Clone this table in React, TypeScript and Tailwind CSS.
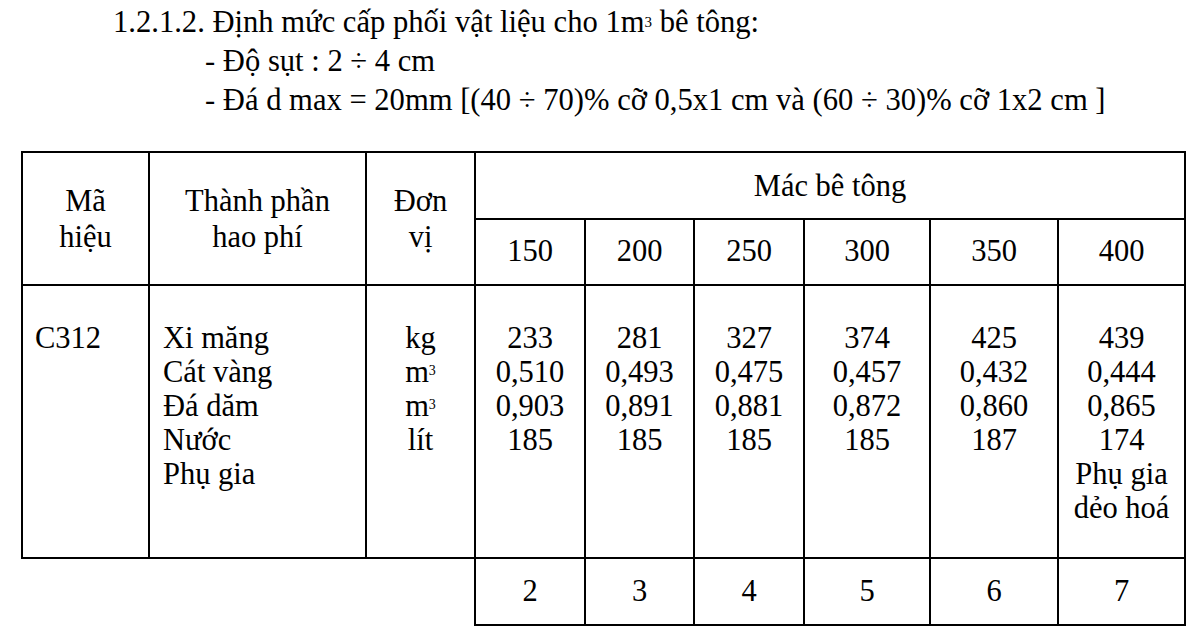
import React from "react";

const cell = "border-2 border-black";

const values: { top: string[]; extra?: string[] }[] = [
  { top: ["233", "0,510", "0,903", "185"] },
  { top: ["281", "0,493", "0,891", "185"] },
  { top: ["327", "0,475", "0,881", "185"] },
  { top: ["374", "0,457", "0,872", "185"] },
  { top: ["425", "0,432", "0,860", "187"] },
  { top: ["439", "0,444", "0,865", "174"], extra: ["Phụ gia", "dẻo hoá"] },
];

export default function App() {
  return (
    <div className="w-[1191px] h-[638px] bg-white text-black overflow-hidden font-['Liberation_Serif','Times_New_Roman',serif]">
      <div className="pt-[3px] text-[30.6px] leading-[39px]">
        <div className="pl-[113px]">
          1.2.1.2. Định mức cấp phối vật liệu cho 1m
          <sup className="text-[15px] relative top-[-5px]">3</sup> bê tông:
        </div>
        <div className="pl-[205px]">- Độ sụt : 2 ÷ 4 cm</div>
        <div className="pl-[205px]">
          - Đá d max = 20mm [(40 ÷ 70)% cỡ 0,5x1 cm và (60 ÷ 30)% cỡ 1x2 cm ]
        </div>
      </div>

      <table className="ml-[21px] mt-[31px] w-[1165px] table-fixed border-collapse text-[30.5px]">
        <colgroup>
          <col className="w-[127px]" />
          <col className="w-[217px]" />
          <col className="w-[109px]" />
          <col className="w-[110px]" />
          <col className="w-[109px]" />
          <col className="w-[110px]" />
          <col className="w-[126px]" />
          <col className="w-[128px]" />
          <col className="w-[127px]" />
        </colgroup>
        <tbody>
          <tr className="h-[67px]">
            <td rowSpan={2} className={`${cell} text-center align-middle leading-[36px]`}>
              Mã
              <br />
              hiệu
            </td>
            <td rowSpan={2} className={`${cell} text-center align-middle leading-[36px]`}>
              Thành phần
              <br />
              hao phí
            </td>
            <td rowSpan={2} className={`${cell} text-center align-middle leading-[36px]`}>
              Đơn
              <br />
              vị
            </td>
            <td colSpan={6} className={`${cell} text-center align-middle pt-[2px]`}>
              Mác bê tông
            </td>
          </tr>
          <tr className="h-[66px]">
            {["150", "200", "250", "300", "350", "400"].map((v) => (
              <td key={v} className={`${cell} text-center align-middle`}>
                {v}
              </td>
            ))}
          </tr>
          <tr className="h-[273px]">
            <td className={`${cell} align-top pl-[12px] pt-[35px] leading-[34px]`}>C312</td>
            <td className={`${cell} align-top pl-[13px] pt-[35px] leading-[34px]`}>
              <div>Xi măng</div>
              <div>Cát vàng</div>
              <div>Đá dăm</div>
              <div>Nước</div>
              <div>Phụ gia</div>
            </td>
            <td className={`${cell} align-top text-center pt-[35px] leading-[34px]`}>
              <div>kg</div>
              <div>
                m<sup className="text-[14px] relative top-[-7px]">3</sup>
              </div>
              <div>
                m<sup className="text-[14px] relative top-[-7px]">3</sup>
              </div>
              <div>lít</div>
            </td>
            {values.map((col, i) => (
              <td key={i} className={`${cell} align-top text-center pt-[35px] leading-[34px]`}>
                {col.top.map((t, j) => (
                  <div key={j}>{t}</div>
                ))}
                {col.extra?.map((t, j) => (
                  <div key={`e${j}`}>{t}</div>
                ))}
              </td>
            ))}
          </tr>
          <tr className="h-[67px]">
            <td colSpan={3} className="border-0"></td>
            {["2", "3", "4", "5", "6", "7"].map((v) => (
              <td key={v} className={`${cell} text-center align-middle`}>
                {v}
              </td>
            ))}
          </tr>
        </tbody>
      </table>
    </div>
  );
}
